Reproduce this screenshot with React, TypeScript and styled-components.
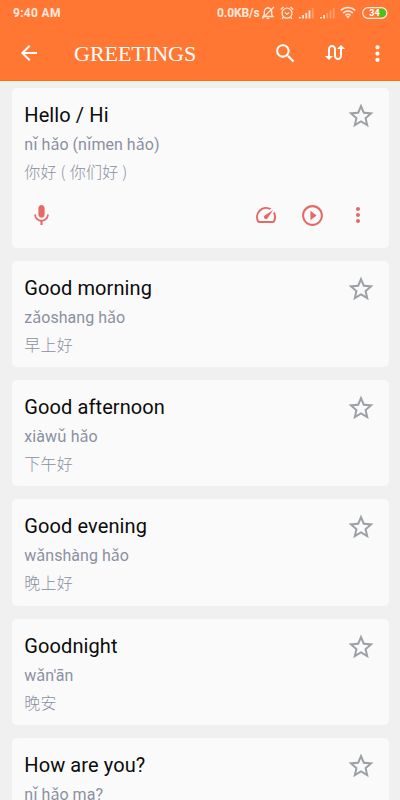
import React from "react";
import styled, { createGlobalStyle } from "styled-components";
import {
  MdArrowBack,
  MdMic,
  MdMoreVert,
  MdPlayCircleOutline,
  MdSearch,
  MdSpeed,
  MdStarBorder,
  MdSwapCalls,
} from "react-icons/md";

const GlobalStyle = createGlobalStyle`
  * { box-sizing: border-box; }
  body {
    margin: 0;
    background: #f0f0f0;
    font-family: Roboto, "Noto Sans CJK SC", sans-serif;
  }
  button {
    border: 0;
    padding: 0;
    background: none;
    color: inherit;
  }
`;

const Screen = styled.div`
  width: 400px;
  height: 800px;
  overflow: hidden;
  background: #f0f0f0;
`;

const Header = styled.header`
  height: 81px;
  background: #ff7733;
  border-bottom: 1px solid #ff6d05;
  color: #fff;
`;

const StatusBar = styled.div`
  height: 25px;
  display: flex;
  align-items: center;
  padding: 0 12.5px 0 13px;
  color: #ffe9df;
  font-size: 12px;
  font-weight: 700;
`;

const Clock = styled.span`
  flex: 1;
  letter-spacing: 0.3px;
`;

const Speed = styled.span`
  width: 44px;
  white-space: nowrap;
  letter-spacing: -0.1px;
`;

const StatusIcon = styled.svg<{ $gap: number }>`
  display: block;
  flex: none;
  margin-left: ${(p) => p.$gap}px;
`;

const Toolbar = styled.div`
  height: 55px;
  display: flex;
  align-items: center;
  padding: 1px 10px 0 17px;
`;

const PageTitle = styled.h1`
  flex: 1;
  margin: 2px 0 0 33px;
  font: 400 22px/28px "Liberation Serif", serif;
  white-space: nowrap;
`;

const IconButton = styled.button<{ $size: number; $gap?: number }>`
  display: flex;
  flex: none;
  margin-left: ${(p) => p.$gap ?? 0}px;
  svg {
    width: ${(p) => p.$size}px;
    height: ${(p) => p.$size}px;
  }
`;

const List = styled.main`
  display: flex;
  flex-direction: column;
  gap: 12.9px;
  padding: 6.8px 11.4px 0 11.6px;
`;

const Card = styled.article<{ $open: boolean }>`
  flex: none;
  height: ${(p) => (p.$open ? 160 : 106.4)}px;
  padding: 13px 13px 0 12.7px;
  border-radius: 5px;
  background: #fafafa;
`;

const CardTop = styled.div`
  display: flex;
  justify-content: space-between;
  height: 28px;
`;

const Phrase = styled.h2`
  margin: 0;
  color: #0b0b0b;
  font-size: 20px;
  font-weight: 400;
  line-height: 28px;
  letter-spacing: 0.1px;
`;

const Pinyin = styled.p`
  margin: 3px 0 0;
  color: #8a90a2;
  font-size: 16px;
  line-height: 26px;
  letter-spacing: 0.03px;
`;

const Hanzi = styled.p`
  margin: 0;
  color: #8a90a2;
  font-family: "Noto Sans CJK SC", sans-serif;
  font-size: 16px;
  font-weight: 300;
  line-height: 26px;
  letter-spacing: 0.25px;
`;

const Star = styled(IconButton)`
  height: 30px;
  color: #9da1a6;
`;

const Actions = styled.div`
  display: flex;
  align-items: center;
  height: 26px;
  margin-top: 18.5px;
  padding: 0 5.5px 0 5px;
  color: #e46a66;
`;

const Spacer = styled.span`
  flex: 1;
`;

const phrases = [
  { en: "Hello / Hi", py: "nǐ hǎo (nǐmen hǎo)", zh: "你好 ( 你们好 )", open: true },
  { en: "Good morning", py: "zǎoshang hǎo", zh: "早上好" },
  { en: "Good afternoon", py: "xiàwǔ hǎo", zh: "下午好" },
  { en: "Good evening", py: "wǎnshàng hǎo", zh: "晚上好" },
  { en: "Goodnight", py: "wǎn'ān", zh: "晚安" },
  { en: "How are you?", py: "nǐ hǎo ma?", zh: "你好吗？" },
];

const Signal = ({ lit, gap }: { lit: number; gap: number }) => (
  <StatusIcon $gap={gap} width="15" height="12" viewBox="0 0 15 12" fill="#ffe9df">
    {[1.5, 3.5, 5.5, 8, 10.5].map((h, i) => (
      <rect key={h} x={i * 3.2} y={11.5 - h} width="1.8" height={h} opacity={i < lit ? 1 : 0.35} />
    ))}
  </StatusIcon>
);

const SilentBell = () => (
  <StatusIcon $gap={0} width="14" height="14" viewBox="0 0 14 14" fill="none" stroke="#ffe9df" strokeWidth="1.3">
    <path d="M2 10.5h10L10.7 8.6V5.7a3.7 3.7 0 0 0-7.4 0v2.9z" />
    <path d="M5.6 12.3h2.8M7 2V.8M13 1 1.2 12.6" />
  </StatusIcon>
);

const Alarm = () => (
  <StatusIcon $gap={5} width="14" height="14" viewBox="0 0 14 14" fill="none" stroke="#ffe9df" strokeWidth="1.3">
    <circle cx="7" cy="7.2" r="5" />
    <path d="M4.8 6.5 7 8.2l2.2-1.7M.8 3.4 3.5 1M13.2 3.4 10.5 1M3.4 11.2 2 12.8M10.6 11.2l1.4 1.6" />
  </StatusIcon>
);

const Wifi = () => (
  <StatusIcon $gap={5} width="16" height="13" viewBox="0 0 16 13" fill="none" stroke="#ffe9df" strokeWidth="1.7">
    <path d="M.8 4.5a10.2 10.2 0 0 1 14.4 0M3.2 7a6.8 6.8 0 0 1 9.6 0M5.5 9.3a3.5 3.5 0 0 1 5 0" />
    <path d="m8 12.5-1.8-1.9a2.6 2.6 0 0 1 3.6 0z" fill="#ffe9df" stroke="none" />
  </StatusIcon>
);

const Battery = () => (
  <StatusIcon $gap={5.5} width="26" height="12" viewBox="0 0 26 12">
    <path d="M17 2h3.5a4 4 0 0 1 0 8H17z" fill="#45c51c" />
    <rect x=".7" y=".7" width="24.2" height="10.6" rx="5.3" fill="none" stroke="#ffe9df" strokeWidth="1.2" />
    <text x="12.5" y="9.2" textAnchor="middle" fontFamily="Roboto" fontSize="9" fontWeight="700" fill="#fff">34</text>
  </StatusIcon>
);

export default function App() {
  return (
    <Screen>
      <GlobalStyle />
      <Header>
        <StatusBar>
          <Clock>9:40 AM</Clock>
          <Speed>0.0KB/s</Speed>
          <SilentBell />
          <Alarm />
          <Signal lit={4} gap={5} />
          <Signal lit={2} gap={6} />
          <Wifi />
          <Battery />
        </StatusBar>
        <Toolbar>
          <IconButton $size={24} aria-label="Back"><MdArrowBack /></IconButton>
          <PageTitle>GREETINGS</PageTitle>
          <IconButton $size={25} aria-label="Search"><MdSearch /></IconButton>
          <IconButton $size={24} $gap={25} aria-label="Swap"><MdSwapCalls /></IconButton>
          <IconButton $size={25} $gap={18} aria-label="More"><MdMoreVert /></IconButton>
        </Toolbar>
      </Header>
      <List>
        {phrases.map((p) => (
          <Card key={p.en} $open={!!p.open}>
            <CardTop>
              <Phrase>{p.en}</Phrase>
              <Star $size={30} aria-label="Favourite"><MdStarBorder /></Star>
            </CardTop>
            <Pinyin>{p.py}</Pinyin>
            <Hanzi>{p.zh}</Hanzi>
            {p.open && (
              <Actions>
                <IconButton $size={25} aria-label="Record"><MdMic /></IconButton>
                <Spacer />
                <IconButton $size={24} aria-label="Slow"><MdSpeed /></IconButton>
                <IconButton $size={25} $gap={21.5} aria-label="Play"><MdPlayCircleOutline /></IconButton>
                <IconButton $size={24} $gap={21.5} aria-label="Options"><MdMoreVert /></IconButton>
              </Actions>
            )}
          </Card>
        ))}
      </List>
    </Screen>
  );
}
